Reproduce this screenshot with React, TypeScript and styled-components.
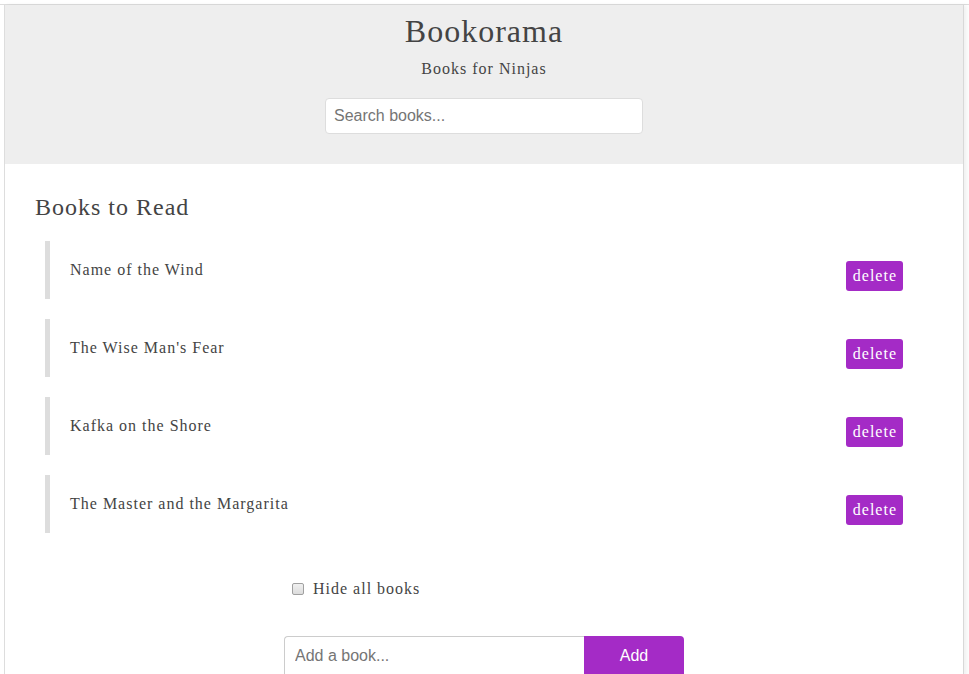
import React from "react";
import styled, { createGlobalStyle } from "styled-components";

const GlobalStyle = createGlobalStyle`
  html, body { margin: 0; padding: 0; background: #fff; }
  body {
    font-family: "Liberation Serif", "Times New Roman", serif;
    color: #444;
    letter-spacing: 1px;
  }
  * { box-sizing: border-box; }
`;

const Page = styled.div`
  margin-top: 4px;
  border-top: 1px solid #ddd;
  min-height: 670px;
`;

const Frame = styled.div`
  margin-left: 4px;
  width: 960px;
  min-height: 669px;
  border-left: 1px solid #ddd;
  border-right: 1px solid #d8d8d8;
  box-shadow: 3px 0 4px rgba(0, 0, 0, 0.06);
  background: #fff;
`;

const Header = styled.header`
  background: #eee;
  padding: 10px 0 30px;
  display: flex;
  flex-direction: column;
  align-items: center;
`;

const Title = styled.h1`
  margin: 0;
  font-weight: normal;
  font-size: 32px;
  line-height: 32px;
  letter-spacing: 1px;
  color: #444;
`;

const Subtitle = styled.p`
  margin: 14px 0 0;
  font-size: 16px;
  line-height: 16px;
  color: #444;
`;

const SearchInput = styled.input`
  margin-top: 21px;
  width: 318px;
  height: 36px;
  border: 1px solid #ddd;
  border-radius: 4px;
  padding: 0 8px;
  font-family: "Liberation Sans", Arial, sans-serif;
  font-size: 16px;
  color: #444;
  background: #fff;
  outline: none;
  &::placeholder { color: #757575; }
`;

const Content = styled.main`
  padding: 31px 30px 0;
`;

const SectionTitle = styled.h2`
  margin: 0 0 22px;
  font-weight: normal;
  font-size: 24px;
  line-height: 24px;
  color: #444;
`;

const List = styled.ul`
  list-style: none;
  margin: 0 10px;
  padding: 0;
  display: flex;
  flex-direction: column;
  gap: 20px;
`;

const Item = styled.li`
  display: flex;
  align-items: flex-start;
  justify-content: space-between;
  border-left: 5px solid #ddd;
  padding: 20px;
`;

const BookName = styled.span`
  font-size: 16px;
  line-height: 18px;
  color: #444;
`;

const DeleteButton = styled.button`
  height: 30px;
  margin-bottom: -12px;
  padding: 0 6px 0 7px;
  border: none;
  border-radius: 3px;
  background: #a42bc6;
  color: #fff;
  font-family: "Liberation Serif", "Times New Roman", serif;
  font-size: 16px;
  letter-spacing: 1px;
  cursor: pointer;
`;

const CheckRow = styled.label`
  display: flex;
  align-items: center;
  width: 400px;
  margin: 47px auto 0;
  padding-left: 8px;
  font-size: 16px;
  line-height: 18px;
  color: #444;
`;

const CheckBox = styled.input`
  appearance: none;
  width: 12px;
  height: 12px;
  margin: 0 9px 0 0;
  border: 1px solid #a0a0a0;
  border-radius: 2px;
  background: linear-gradient(#f0f0f0, #dcdcdc);
`;

const AddForm = styled.form`
  display: flex;
  width: 400px;
  margin: 38px auto 0;
`;

const AddInput = styled.input`
  width: 300px;
  height: 40px;
  border: 1px solid #ccc;
  border-right: none;
  border-radius: 4px 0 0 0;
  padding: 0 10px;
  font-family: "Liberation Sans", Arial, sans-serif;
  font-size: 16px;
  color: #444;
  outline: none;
  &::placeholder { color: #757575; }
`;

const AddButton = styled.button`
  width: 100px;
  height: 40px;
  border: none;
  border-radius: 0 4px 0 0;
  background: #a42bc6;
  color: #fff;
  font-family: "Liberation Sans", Arial, sans-serif;
  font-size: 16px;
  letter-spacing: 0;
`;

const books = [
  "Name of the Wind",
  "The Wise Man's Fear",
  "Kafka on the Shore",
  "The Master and the Margarita",
];

export default function App() {
  return (
    <>
      <GlobalStyle />
      <Page>
        <Frame>
          <Header>
            <Title>Bookorama</Title>
            <Subtitle>Books for Ninjas</Subtitle>
            <SearchInput placeholder="Search books..." />
          </Header>
          <Content>
            <SectionTitle>Books to Read</SectionTitle>
            <List>
              {books.map((b) => (
                <Item key={b}>
                  <BookName>{b}</BookName>
                  <DeleteButton>delete</DeleteButton>
                </Item>
              ))}
            </List>
            <CheckRow>
              <CheckBox type="checkbox" />
              Hide all books
            </CheckRow>
            <AddForm onSubmit={(e) => e.preventDefault()}>
              <AddInput placeholder="Add a book..." />
              <AddButton type="submit">Add</AddButton>
            </AddForm>
          </Content>
        </Frame>
      </Page>
    </>
  );
}
